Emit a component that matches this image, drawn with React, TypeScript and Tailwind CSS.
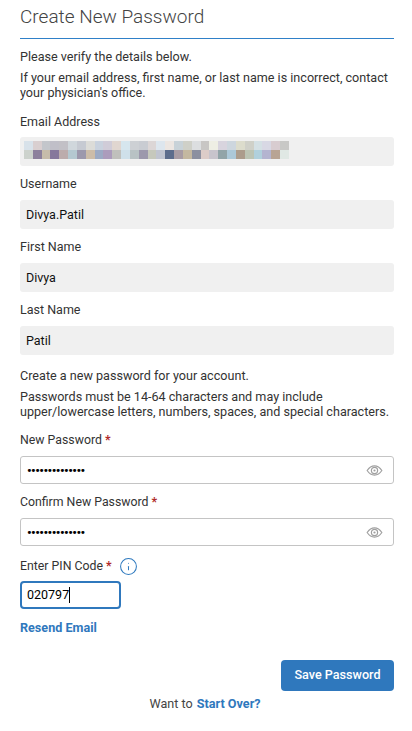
import { Info } from "lucide-react";

const mosaicTop = [
  "#d8e2ea", "#d9cfd0", "#c3c6cb", "#c0bfc8", "#c2c0c6", "#d0d7dc", "#c6cad2", "#dcdcd8", "#c9d2de", "#d0ccd8",
  "#e0d6d0", "#d6e6ee", "#cdd0d4", "#c9ccd2", "#dcd6d6", "#dde6ee", "#ece6e2", "#c8d2d8", "#cfd0c8", "#dcdee0",
  "#c8c6c4", "#eeeee4", "#d8d4de", "#cdd6de", "#dcdccc", "#cfd0c8", "#d4e0e4", "#d8d8e4", "#d8ccd0", "#c8c8c6",
];
const mosaicBottom = [
  "#ccd2cc", "#8c809c", "#c6bcaa", "#86789c", "#bcacac", "#b4c8d0", "#9c98ac", "#ccbca8", "#9caac4", "#ac9cbc",
  "#c0c0bc", "#cfe0ea", "#b8c2c4", "#9c98ac", "#c6c8bc", "#c0c4d0", "#5c6c8c", "#a89ca4", "#c4b8a0", "#8c90a0",
  "#dcccc8", "#c8c4cc", "#92a4a8", "#acc8d8", "#ac9c8c", "#bcc4b4", "#b0d0dc", "#b4b4d0", "#b8a494", "#e0e8e4",
];

function EyeIcon() {
  return (
    <svg viewBox="0 0 18 12" className="h-[11px] w-[17px] text-[#a0a0a0]" fill="none" stroke="currentColor" strokeWidth="1.3">
      <path d="M1 6c2-3 4.800-5 8-5s6 2 8 5c-2 3-4.800 5-8 5s-6-2-8-5z" />
      <circle cx="9" cy="6" r="3.400" />
      <circle cx="9" cy="6" r="1.200" fill="currentColor" stroke="none" />
    </svg>
  );
}

function ReadOnlyField({ label, value }: { label: string; value: string }) {
  return (
    <div className="mt-[9px]">
      <div className="text-[12.5px] leading-[18px] text-[#333]">{label}</div>
      <div className="mt-[7px] h-[29px] rounded-[3px] bg-[#f0f0f0] pl-[6px] text-[12.5px] leading-[29px] text-[#111]">{value}</div>
    </div>
  );
}

function PasswordField({ label }: { label: string }) {
  return (
    <div>
      <div className="text-[12.3px] leading-[19px] text-[#333]">
        {label}
        <span className="ml-[3px] font-bold text-[#b02a2a]">*</span>
      </div>
      <div className="mt-[6px] flex h-[28px] items-center justify-between rounded-[3px] border border-[#c4c4c4] pl-[6px] pr-[10px]">
        <span className="text-[13px] font-bold leading-none tracking-[-0.55px] text-black">••••••••••••••</span>
        <EyeIcon />
      </div>
    </div>
  );
}

export default function App() {
  return (
    <div className="h-[731px] w-[412px] bg-white pl-5 pr-[18px] font-['Roboto',sans-serif]">
      <h1 className="border-b border-[#2f80c8] pb-[8px] pt-[4px] text-[19px] font-light leading-[26px] text-[#444]">
        Create New Password
      </h1>
      <p className="mt-[10px] text-[12.6px] leading-[16px] text-[#333]">Please verify the details below.</p>
      <p className="mt-[5px] text-[12.6px] leading-[15px] text-[#333]">
        If your email address, first name, or last name is incorrect, contact your physician's office.
      </p>
      <div className="mt-[13px]">
        <div className="text-[12.5px] leading-[18px] text-[#333]">Email Address</div>
        <div className="mt-[6px] h-[29px] rounded-[3px] bg-[#f0f0f0] pl-[4px] pt-[4px]">
          <div className="flex">
            {mosaicTop.map((c, i) => (
              <div key={i} className="h-[9px] w-[8.83px]" style={{ backgroundColor: c }} />
            ))}
          </div>
          <div className="flex">
            {mosaicBottom.map((c, i) => (
              <div key={i} className="h-[9px] w-[8.83px]" style={{ backgroundColor: c }} />
            ))}
          </div>
        </div>
      </div>
      <ReadOnlyField label="Username" value="Divya.Patil" />
      <ReadOnlyField label="First Name" value="Divya" />
      <ReadOnlyField label="Last Name" value="Patil" />
      <p className="mt-[13px] text-[12.6px] leading-[16px] text-[#333]">Create a new password for your account.</p>
      <p className="mt-[5px] text-[12.6px] leading-[15px] text-[#333]">
        Passwords must be 14-64 characters and may include upper/lowercase letters, numbers, spaces, and special characters.
      </p>
      <div className="mt-[12px]">
        <PasswordField label="New Password" />
      </div>
      <div className="mt-[9px]">
        <PasswordField label="Confirm New Password" />
      </div>
      <div className="mt-[10px] flex h-[20px] items-center text-[12.3px] text-[#333]">
        <span>
          Enter PIN Code
          <span className="ml-[3px] font-bold text-[#b02a2a]">*</span>
        </span>
        <Info className="ml-[7px] h-[19px] w-[19px] text-[#2f7abf]" strokeWidth={1.3} />
      </div>
      <div className="mt-[5px] flex h-[28px] w-[101px] items-center rounded-[4px] border-2 border-[#2f78bd] pl-[5px] text-[12.5px] text-black">
        020797<span className="h-[16px] w-px bg-black" />
      </div>
      <div className="mt-[10px] text-[12.6px] font-bold leading-[18px] text-[#2f78bd]">Resend Email</div>
      <div className="mt-[23px] flex justify-end">
        <button className="h-[31px] w-[113px] rounded-[4px] bg-[#2f78bd] text-[12.6px] font-medium text-white">Save Password</button>
      </div>
      <div className="mt-[4px] pr-[4px] text-center text-[12.6px] leading-[18px] text-[#444]">
        Want to <span className="ml-[1px] font-bold text-[#2f78bd]">Start Over?</span>
      </div>
    </div>
  );
}
